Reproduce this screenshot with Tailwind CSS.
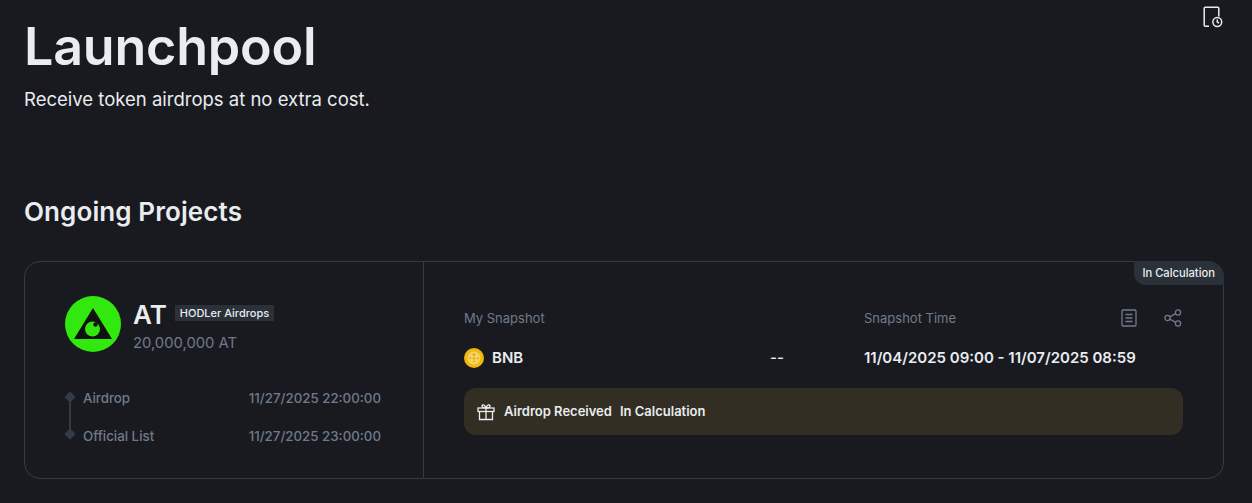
<!DOCTYPE html>
<html lang="en">
<head>
    <meta charset="UTF-8">
    <title>Launchpool</title>
    <script src="https://cdn.jsdelivr.net/npm/@tailwindcss/browser@4"></script>
</head>
<body class="h-[503px] w-[1252px] overflow-hidden bg-[#181a20] font-['Inter',sans-serif] text-[#eaecef]">
    <div class="relative px-6">
        <!-- history icon -->
        <svg class="absolute right-[28px] top-[5px] h-[24px] w-[24px] text-[#eaecef]" viewBox="0 0 24 24" fill="none" stroke="currentColor" stroke-width="1.5">
            <path d="M9 21.2H5.2a1 1 0 0 1-1-1V3.2a1 1 0 0 1 1-1h12.6a1 1 0 0 1 1 1v8.300"/>
            <circle cx="17.300" cy="17" r="4.400"/>
            <path d="M17.300 14.600V17l1.700 1.100"/>
        </svg>

        <h1 class="pt-[15px] text-[52px] font-semibold leading-[64px] tracking-[-0.2px] text-[#eaecef]">Launchpool</h1>
        <p class="mt-[6px] text-[18.500px] leading-[28px] text-[#eaecef]">Receive token airdrops at no extra cost.</p>
        <h2 class="mt-[81px] text-[26px] font-semibold leading-[36px] tracking-[0.1px] text-[#eaecef]">Ongoing Projects</h2>

        <div class="relative mt-[31px] flex h-[218px] w-[1200px] rounded-[16px] border border-[#333b47]">
            <span class="absolute -right-px -top-px flex h-[24px] items-center rounded-tr-[16px] rounded-bl-[12px] bg-[#2b3139] pl-[8px] pr-[9px] text-[11.200px] font-medium text-[#eaecef]">In Calculation</span>

            <!-- left side -->
            <div class="w-[399px] border-r border-[#333b47] pl-[40px] pr-[42px] pt-[34px]">
                <div class="flex gap-[12px]">
                    <svg class="h-[56px] w-[56px] shrink-0" viewBox="0 0 56 56">
                        <circle cx="28" cy="28" r="28" fill="#31e80f"/>
                        <path d="M28 12 L47 43 H9 Z" fill="#10120f"/>
                        <circle cx="27.500" cy="33" r="7.500" fill="#31e80f"/>
                        <circle cx="30.500" cy="28.500" r="2.200" fill="#10120f"/>
                    </svg>
                    <div>
                        <div class="flex items-start gap-[8px]">
                            <span class="pt-[1px] text-[26px] font-semibold leading-[36px] text-[#eaecef]">AT</span>
                            <span class="mt-[9px] bg-[#2b3139] px-[5px] text-[11px] font-medium leading-[16px] text-[#eaecef]">HODLer Airdrops</span>
                        </div>
                        <div class="text-[14.800px] leading-[20px] text-[#707a8a]">20,000,000 AT</div>
                    </div>
                </div>

                <div class="relative mt-[35px] flex flex-col gap-[18px] text-[13.300px] font-medium leading-[20px] text-[#707a8a]">
                    <div class="absolute left-0 top-[5px] flex h-[45px] w-[9px] flex-col items-center justify-between">
                        <span class="h-[8px] w-[8px] rotate-45 rounded-[1px] bg-[#333b47]"></span>
                        <span class="absolute top-[4px] h-[37px] w-[2px] bg-[#333b47]"></span>
                        <span class="h-[8px] w-[8px] rotate-45 rounded-[1px] bg-[#333b47]"></span>
                    </div>
                    <div class="flex justify-between pl-[18px]"><span>Airdrop</span><span>11/27/2025 22:00:00</span></div>
                    <div class="flex justify-between pl-[18px]"><span>Official List</span><span>11/27/2025 23:00:00</span></div>
                </div>
            </div>

            <!-- right side -->
            <div class="flex-1 pl-[40px] pr-[40px] pt-[46px]">
                <div class="relative flex text-[13px] leading-[20px] text-[#707a8a]">
                    <span class="w-[400px]">My Snapshot</span>
                    <span>Snapshot Time</span>
                    <div class="absolute right-0 top-0 flex items-center gap-[24px]">
                        <svg class="h-[20px] w-[20px]" viewBox="0 0 20 20" fill="none" stroke="currentColor" stroke-width="1.300">
                            <rect x="3" y="2" width="14" height="16" rx="1"/>
                            <path d="M6.500 6.500h7M6.500 10h7M6.500 13.500h7"/>
                        </svg>
                        <svg class="h-[20px] w-[20px]" viewBox="0 0 20 20" fill="none" stroke="currentColor" stroke-width="1.300">
                            <circle cx="15" cy="4.500" r="2.600"/>
                            <circle cx="4.500" cy="10" r="2.600"/>
                            <circle cx="15" cy="15.500" r="2.600"/>
                            <path d="M6.800 8.800l5.900-3.100M6.800 11.200l5.900 3.100"/>
                        </svg>
                    </div>
                </div>

                <div class="mt-[20px] flex items-center text-[15px] font-semibold leading-[20px] text-[#eaecef]">
                    <div class="flex w-[306px] items-center gap-[8px]">
                        <svg class="h-[20px] w-[20px]" viewBox="0 0 20 20">
                            <circle cx="10" cy="10" r="10" fill="#f0b90b"/>
                            <circle cx="10" cy="10" r="6.500" fill="#f6d465"/>
                            <path d="M10 5l1.800 1.800-1.800 1.800-1.800-1.800zM6 9l1.500 1-1.500 1.500-1-1.500zM14 9l1 1-1 1.500-1.500-1.500zM10 9l1.500 1.500-1.500 1.500-1.500-1.500zM10 13l-1.500-1 1.500 3 1.500-3z" fill="#e8a90a"/>
                        </svg>
                        <span>BNB</span>
                    </div>
                    <span class="w-[94px] font-medium">--</span>
                    <span>11/04/2025 09:00 - 11/07/2025 08:59</span>
                </div>

                <div class="mt-[20px] flex h-[47px] items-center gap-[8px] rounded-[12px] bg-[#322e23] px-[13px] text-[13px] font-semibold text-[#eaecef]">
                    <svg class="h-[18px] w-[18px]" viewBox="0 0 18 18" fill="none" stroke="currentColor" stroke-width="1.300">
                        <rect x="1" y="5" width="16" height="3.500"/>
                        <path d="M2.500 8.500V16.500H15.500V8.500M9 5V16.500M9 5C7 5 5 4.500 5 3S7.500 1 9 5ZM9 5C11 5 13 4.500 13 3S10.500 1 9 5Z"/>
                    </svg>
                    <span class="ml-[1px]">Airdrop Received</span>
                    <span>In Calculation</span>
                </div>
            </div>
        </div>
    </div>
</body>
</html>
